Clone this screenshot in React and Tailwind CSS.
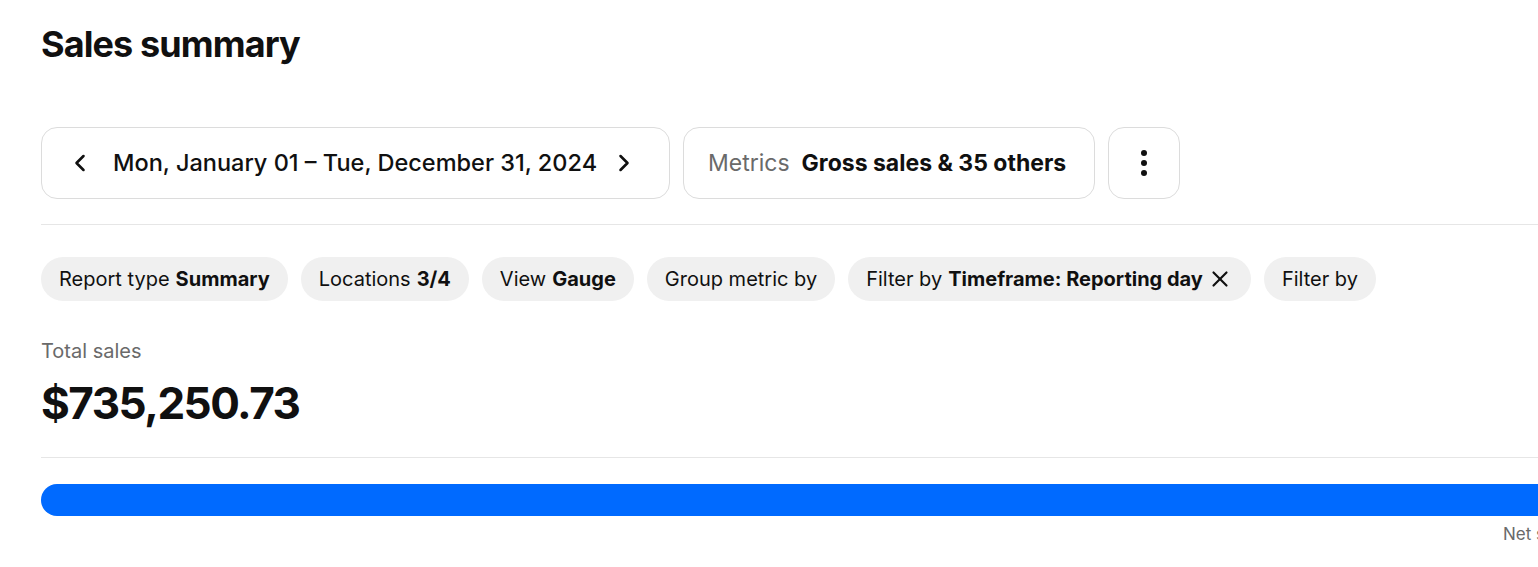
import React from 'react';
import { FiChevronLeft, FiChevronRight, FiX } from 'react-icons/fi';

const pills = [
    { label: 'Report type', value: 'Summary' },
    { label: 'Locations', value: '3/4' },
    { label: 'View', value: 'Gauge' },
    { label: 'Group metric by', value: null },
    { label: 'Filter by', value: 'Timeframe: Reporting day', close: true },
    { label: 'Filter by', value: null },
];

function App() {
    return (
        <div className='w-[1538px] h-[567px] overflow-hidden bg-white text-[#101010] font-["Inter",sans-serif]'>
            <div className='w-[1700px] pl-[41px] pt-[22px]'>
                <h1 className='text-[36px] leading-[44px] font-bold tracking-[-0.9px]'>Sales summary</h1>

                {/* Date range / metrics */}
                <div className='flex gap-[13px] mt-[61px]'>
                    <div className='flex items-center h-[72px] w-[629px] pl-[24px] border border-[#dcdcdc] rounded-[16px]'>
                        <FiChevronLeft className='text-[28px] stroke-[2.2]' />
                        <span className='ml-[19px] text-[23.5px] font-medium'>Mon, January 01 – Tue, December 31, 2024</span>
                        <FiChevronRight className='ml-[13px] text-[28px] stroke-[2.2]' />
                    </div>
                    <div className='flex items-center h-[72px] w-[412px] px-[24px] border border-[#dcdcdc] rounded-[16px] text-[23px]'>
                        <span className='text-[#6a6a6a]'>Metrics</span>
                        <span className='ml-[12px] font-bold'>Gross sales &amp; 35 others</span>
                    </div>
                    <div className='flex items-center justify-center w-[72px] h-[72px] border border-[#dcdcdc] rounded-[16px]'>
                        <div className='flex flex-col gap-[4px]'>
                            <span className='block w-[6px] h-[6px] rounded-full bg-[#101010]' />
                            <span className='block w-[6px] h-[6px] rounded-full bg-[#101010]' />
                            <span className='block w-[6px] h-[6px] rounded-full bg-[#101010]' />
                        </div>
                    </div>
                </div>

                <div className='h-px bg-[#e6e6e6] mt-[25px]' />

                {/* Filter pills */}
                <div className='flex gap-[13px] mt-[32px] text-[20px]'>
                    {pills.map((p, i) => (
                        <div key={i} className='flex items-center h-[44px] px-[18px] rounded-full bg-[#f0f0f0]'>
                            <span>{p.label}</span>
                            {p.value && <span className='ml-[6px] font-bold'>{p.value}</span>}
                            {p.close && <FiX className='ml-[4px] text-[26px] stroke-2' />}
                        </div>
                    ))}
                </div>

                {/* Total */}
                <div className='mt-[38px]'>
                    <div className='text-[20px] leading-[24px] text-[#6a6a6a]'>Total sales</div>
                    <div className='mt-[12px] text-[44px] leading-[56px] font-bold tracking-[-1.5px]'>$735,250.73</div>
                </div>

                <div className='h-px bg-[#e6e6e6] mt-[26px]' />

                <div className='mt-[26px] h-[32px] rounded-full bg-[#006aff]' />
                <div className='w-[1600px] text-[17px] leading-[20px] text-[#6a6a6a] mt-[8px] pl-[1462px]'>Net sales</div>
            </div>
        </div>
    );
}

export default App;
